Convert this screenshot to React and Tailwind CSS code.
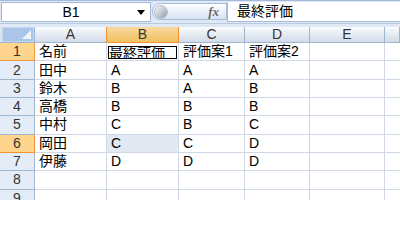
import React from "react";

const font = { fontFamily: '"Liberation Sans", "Noto Sans CJK JP", sans-serif' };

const cols = ["A", "B", "C", "D", "E", ""];

const rows = [
  ["名前", "最終評価", "評価案1", "評価案2", ""],
  ["田中", "A", "A", "A", ""],
  ["鈴木", "B", "A", "B", ""],
  ["高橋", "B", "B", "B", ""],
  ["中村", "C", "B", "C", ""],
  ["岡田", "C", "C", "D", ""],
  ["伊藤", "D", "D", "D", ""],
  ["", "", "", "", ""],
  ["", "", "", "", ""],
];

function FormulaBar() {
  return (
    <div className="flex h-[27px] bg-[#dfe8f5] border-t border-[#a3bad9] relative">
      <div className="flex items-center h-[20px] w-[150px] ml-[1px] mt-[1px] bg-white border border-[#a3bad9]">
        <div className="flex-1 text-center text-[14px] text-black pl-[6px]">B1</div>
        <div className="w-[16px] flex justify-center pr-[2px]">
          <svg width="8" height="5" viewBox="0 0 8 5"><path d="M0 0h8L4 5z" fill="#000" /></svg>
        </div>
      </div>
      <div className="flex items-center justify-between w-[75px] h-[17px] mt-[2px] ml-[1px] rounded-l-full border border-[#a3bad9] bg-gradient-to-b from-[#ffffff] to-[#d9e3f2]">
        <div className="w-[14px] h-[14px] ml-[1px] rounded-full bg-gradient-to-br from-[#f4f6f9] via-[#c7ccd4] to-[#8d96a3] border border-[#b6c2d2]" />
        <span className="pr-[7px] text-[13px] italic text-[#6b6b6b] font-bold" style={{ fontFamily: '"Liberation Serif", serif' }}>fx</span>
      </div>
      <div className="flex-1 h-[20px] mt-[1px] bg-white border-l border-b border-[#a3bad9] flex items-center pl-[9px] text-[14px] text-black">
        最終評価
      </div>
      <div className="absolute left-0 right-0 bottom-[3px] h-[1px] bg-[#b9c9de]" />
    </div>
  );
}

function ColHeader({ label, active }) {
  return (
    <div
      className={
        active
          ? "flex items-center justify-center border-r border-l border-b border-[#f29436] bg-gradient-to-b from-[#f9d99f] to-[#f1c15f] text-[14px] text-[#333] -ml-[1px]"
          : "flex items-center justify-center border-r border-b border-[#9eb6ce] bg-gradient-to-b from-[#f9fcfd] to-[#d3dbe9] text-[14px] text-[#333]"
      }
    >
      {label}
    </div>
  );
}

function RowHeader({ n, active }) {
  return (
    <div
      className={
        active
          ? "flex items-center justify-center border-r border-b border-[#f29436] bg-[#ffd58d] text-[14px] text-[#333]"
          : "flex items-center justify-center border-r border-b border-[#9eb6ce] bg-[#e4ecf7] text-[14px] text-[#333]"
      }
    >
      {n}
    </div>
  );
}

export default function App() {
  return (
    <div className="w-[400px] h-[200px] overflow-hidden bg-white" style={font}>
      <FormulaBar />
      <div className="grid grid-cols-[35px_72px_72px_66px_65px_75px_1fr] grid-rows-[16px_repeat(9,18.33px)]">
        {/* select-all corner */}
        <div className="relative border-r border-b border-[#9eb6ce] bg-[#dbe5f1] pl-[2px]">
          <div className="h-full bg-[#aac5ea] border border-[#c5d7ef] flex items-end justify-end pr-[2px] pb-[2px]">
            <svg width="9" height="9" viewBox="0 0 9 9"><path d="M9 0v9H0z" fill="#f2f6fc" /></svg>
          </div>
        </div>
        {cols.map((c, i) => (
          <ColHeader key={i} label={c} active={c === "B"} />
        ))}
        {rows.map((r, ri) => (
          <React.Fragment key={ri}>
            <RowHeader n={ri + 1} active={ri === 0 || ri === 5} />
            {r.map((v, ci) => {
              if (ri === 0 && ci === 1) {
                return (
                  <div key={ci} className="border-r border-b border-[#d0d7e5] px-[1px] pt-[3px] pb-[1px]">
                    <div className="h-full border-[1.5px] border-black flex items-center text-[14px] text-black leading-none overflow-hidden whitespace-nowrap">
                      {v}
                    </div>
                  </div>
                );
              }
              const shaded = ri === 5 && ci === 1;
              return (
                <div
                  key={ci}
                  className={
                    (shaded ? "bg-[#e3e9f2] " : "") +
                    "border-r border-b border-[#d0d7e5] flex items-center pl-[4px] text-[14px] text-black whitespace-nowrap overflow-hidden"
                  }
                >
                  {v}
                </div>
              );
            })}
            <div className="border-b border-[#d0d7e5]" />
          </React.Fragment>
        ))}
      </div>
    </div>
  );
}
